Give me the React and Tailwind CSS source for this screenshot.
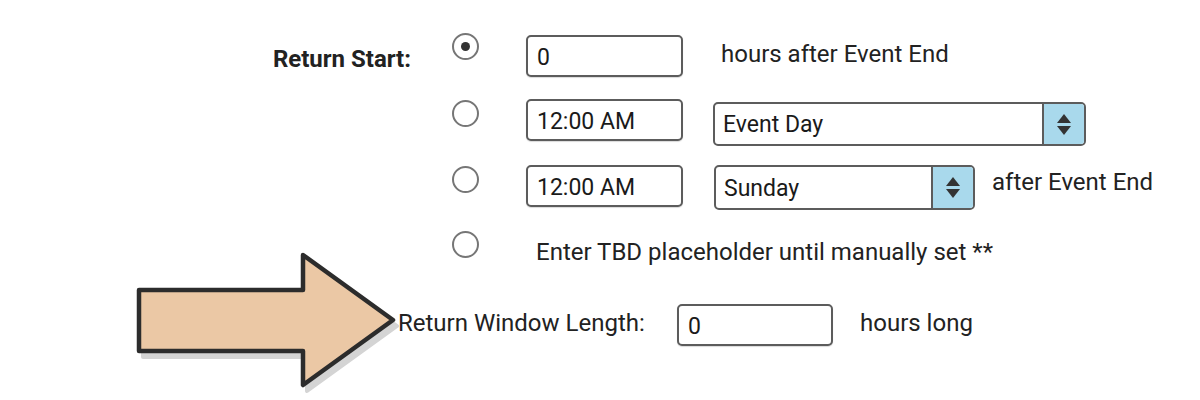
import React from 'react';

function Radio({ checked }) {
  return (
    <div className="w-[27px] h-[27px] rounded-full border-2 border-[#767676] bg-white flex items-center justify-center">
      {checked && <div className="w-[9px] h-[9px] rounded-full bg-[#333]" />}
    </div>
  );
}

function TextBox({ value, width = 'w-[157px]' }) {
  return (
    <div className={`${width} h-[42px] rounded-[5px] border-2 border-[#5c5c5c] bg-white flex items-center px-[9px] pt-[4px] text-[23px] leading-[28px] text-[#1a1a1a] shadow-[0_1px_1px_rgba(0,0,0,0.15)]`}>
      {value}
    </div>
  );
}

function Select({ value, width, height = 'h-[44px]' }) {
  return (
    <div className={`${width} ${height} rounded-[5px] border-2 border-[#5c5c5c] bg-white flex overflow-hidden`}>
      <div className="flex-1 flex items-center px-[8px] pt-[2px] text-[23px] leading-[28px] text-[#1a1a1a]">{value}</div>
      <div className="w-[42px] bg-[#a9d9ec] border-l-2 border-[#5c5c5c] flex flex-col items-center justify-center gap-[3px]">
        <svg width="14" height="9" viewBox="0 0 14 9"><path d="M7 0 L14 9 L0 9 Z" fill="#333" /></svg>
        <svg width="14" height="9" viewBox="0 0 14 9"><path d="M0 0 L14 0 L7 9 Z" fill="#333" /></svg>
      </div>
    </div>
  );
}

function Arrow() {
  const pts = '139,290 303,290 303,255 393,320 303,385 303,351 139,351';
  return (
    <svg className="absolute left-0 top-0 pointer-events-none" width="420" height="400" viewBox="0 0 420 400">
      <polygon points={pts} transform="translate(4,6)" fill="#d4d4d4" stroke="#d4d4d4" strokeWidth="4" strokeLinejoin="round" />
      <polygon points={pts} fill="#ebc8a5" stroke="#2c2c2c" strokeWidth="4.5" strokeLinejoin="round" />
    </svg>
  );
}

export default function App() {
  return (
    <div className="relative w-[1200px] h-[400px] bg-white overflow-hidden text-[#222] font-['Roboto','Liberation_Sans',sans-serif] text-[24px] leading-[28px]">
      <div className="pt-[35px] flex flex-col">
        {/* row 1 */}
        <div className="flex items-start h-[64px]">
          <div className="w-[411px] pt-[10px] text-right font-bold">Return Start:</div>
          <div className="ml-[41px] -mt-[2px]"><Radio checked /></div>
          <div className="ml-[47px]"><TextBox value="0" /></div>
          <div className="ml-[38px] pt-[5px]">hours after Event End</div>
        </div>
        {/* row 2 */}
        <div className="flex items-start h-[66px]">
          <div className="w-[411px]" />
          <div className="ml-[41px] pt-[1px]"><Radio /></div>
          <div className="ml-[47px]"><TextBox value="12:00 AM" /></div>
          <div className="ml-[30px] pt-[3px]"><Select value="Event Day" width="w-[373px]" /></div>
        </div>
        {/* row 3 */}
        <div className="flex items-start h-[65px]">
          <div className="w-[411px]" />
          <div className="ml-[41px] pt-[1px]"><Radio /></div>
          <div className="ml-[47px]"><TextBox value="12:00 AM" /></div>
          <div className="ml-[31px]"><Select value="Sunday" width="w-[261px]" height="h-[45px]" /></div>
          <div className="ml-[17px] pt-[3px]">after Event End</div>
        </div>
        {/* row 4 */}
        <div className="flex items-start h-[74px]">
          <div className="w-[411px]" />
          <div className="ml-[41px] pt-[1px]"><Radio /></div>
          <div className="ml-[57px] pt-[8px]">Enter TBD placeholder until manually set **</div>
        </div>
        {/* row 5 */}
        <div className="flex items-start">
          <div className="ml-[398px] w-[279px] pt-[5px] whitespace-nowrap">Return Window Length:</div>
          <TextBox value="0" width="w-[156px]" />
          <div className="ml-[27px] pt-[5px]">hours long</div>
        </div>
      </div>
      <Arrow />
    </div>
  );
}
